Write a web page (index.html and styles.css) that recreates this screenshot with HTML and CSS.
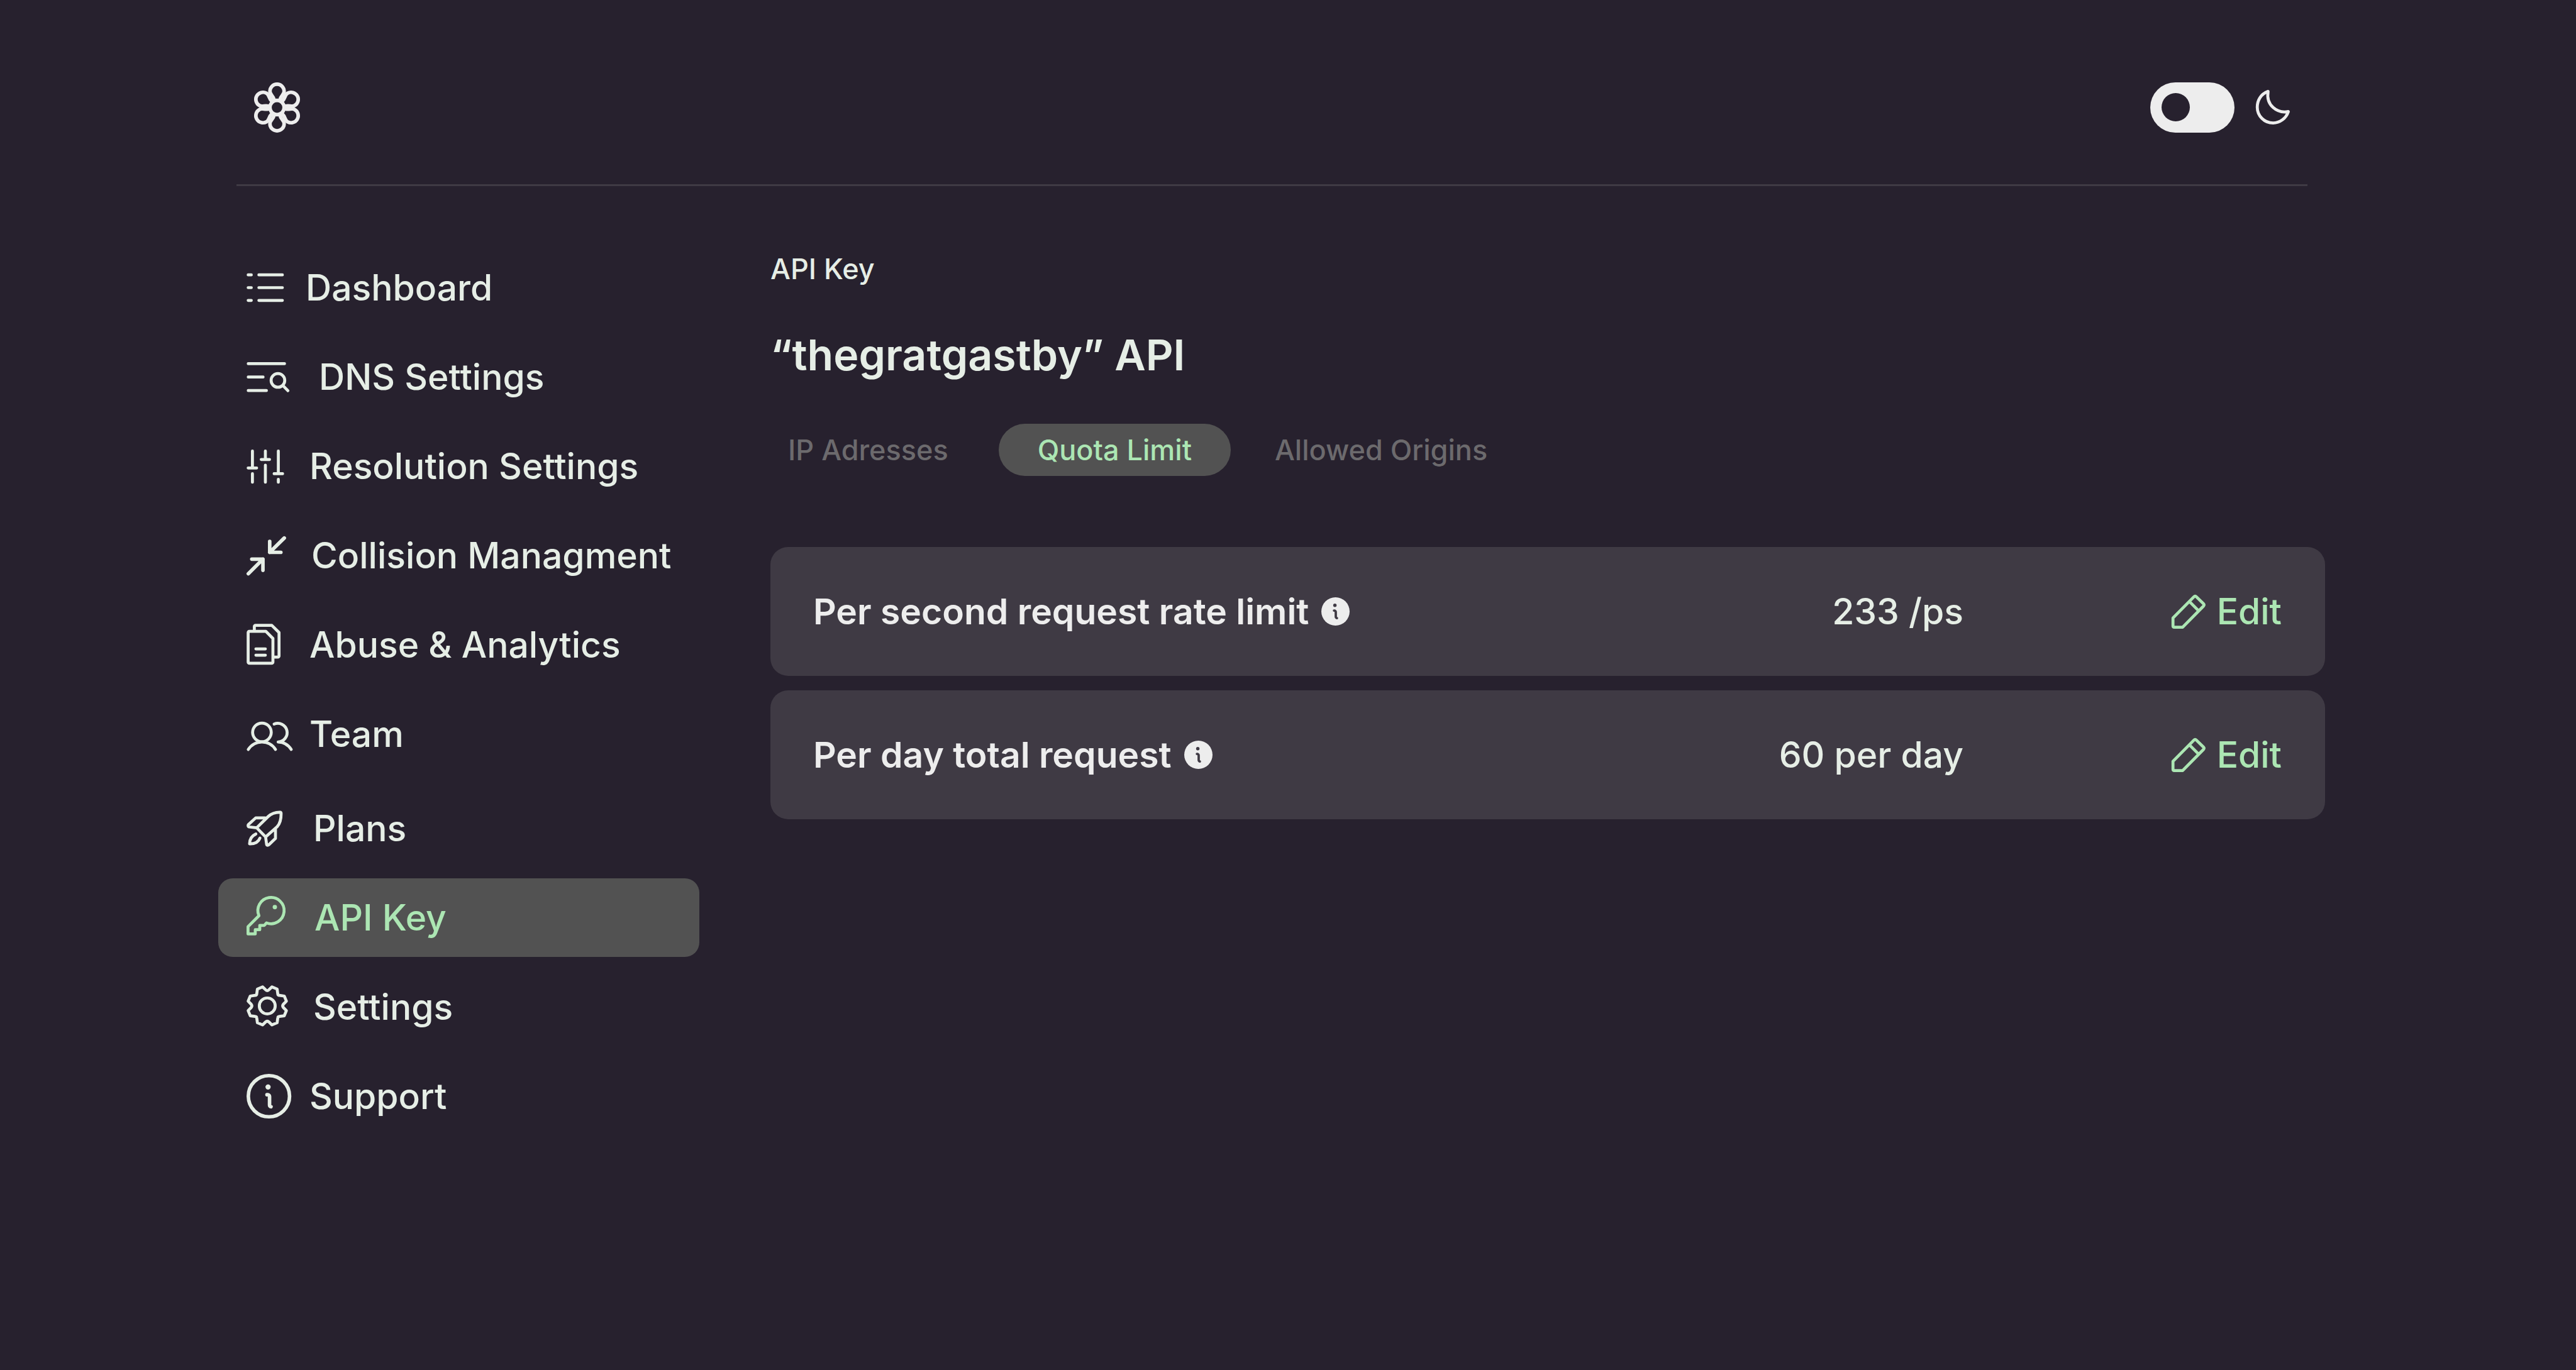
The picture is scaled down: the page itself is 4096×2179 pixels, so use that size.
FILE: index.html
```html
<!DOCTYPE html>
<html lang="en">
<head>
<meta charset="utf-8">
<title>API Key – Quota Limit</title>
<meta name="viewport" content="width=device-width, initial-scale=1">
<link rel="stylesheet" href="styles.css">
</head>
<body>
<div class="page">
  <header class="topbar">
    <a class="logo" href="#" aria-label="Home">
      <svg class="flower" viewBox="0 0 77 84" width="73" height="80" aria-hidden="true">
        <defs><path id="petal" d="M33.4 28.4C32 22 26.600 20.500 26.600 14.700a11.900 11.900 0 0 1 23.800 0C50.400 20.500 45 22 43.600 28.400"/></defs>
        <circle cx="38.500" cy="42" r="11.900"/>
        <use href="#petal"/>
        <use href="#petal" transform="rotate(60 38.500 42)"/>
        <use href="#petal" transform="rotate(120 38.500 42)"/>
        <use href="#petal" transform="rotate(180 38.500 42)"/>
        <use href="#petal" transform="rotate(240 38.500 42)"/>
        <use href="#petal" transform="rotate(300 38.500 42)"/>
      </svg>
    </a>
    <label class="theme">
      <input class="switch" type="checkbox" role="switch" aria-label="Light theme">
      <svg viewBox="0 0 57 58" width="54" height="55" aria-hidden="true">
        <path d="M20.500 2.400C8 7 2.300 18 2.300 29A26.500 26.500 0 0 0 28.800 55.500C40 55.500 50.500 48 54.500 36.300C36 40 16.500 26 20.500 2.400Z"/>
      </svg>
    </label>
  </header>

  <div class="layout">
    <nav class="sidebar" aria-label="Main">
      <ul class="nav-group">
        <li><a class="nav-link" href="#">
          <svg viewBox="0 0 74 90" width="70" height="85" aria-hidden="true"><path d="M2.700 23.500H8M20.700 23.500H60.300M2.700 45H8M20.700 45H60.300M2.700 66.500H8M20.700 66.500H60.300"/></svg>
          Dashboard</a></li>
        <li><a class="nav-link" href="#">
          <svg viewBox="0 0 96 90" width="91" height="85" aria-hidden="true"><path d="M2.700 22.700H63.800M2.700 45.200H27.700M2.700 68H33.300M61 59.500 69.500 68.200"/><circle cx="52.700" cy="50.900" r="11.500"/></svg>
          DNS Settings</a></li>
        <li><a class="nav-link" href="#">
          <svg viewBox="0 0 80 90" width="76" height="85" aria-hidden="true"><path d="M9.700 19.400V48M2.500 48H16.800M9.700 57.600V72M31.500 19.400V33.700M24.500 33.700H38.500M31.500 43.300V72M53.300 19.400V57.600M46.200 57.600H60.500M53.300 67.200V72"/></svg>
          Resolution Settings</a></li>
        <li><a class="nav-link" href="#">
          <svg class="bold" viewBox="0 0 83 90" width="79" height="85" aria-hidden="true"><path d="M63.300 15.500 38.700 39.700M38.700 21.200V39.700H57.500M2.700 75.800 27.300 51.200M8.500 51.200H27.300V70"/></svg>
          Collision Managment</a></li>
        <li><a class="nav-link" href="#">
          <svg viewBox="0 0 80 90" width="76" height="85" aria-hidden="true"><path d="M32.300 22.300H4.500a2 2 0 0 0-2 2V74.200a2 2 0 0 0 2 2H42.200a2 2 0 0 0 2-2V34.400ZM12.900 22V14.300a2 2 0 0 1 2-2H42.300L54.500 24.400V63.800a2 2 0 0 1-2 2H45M15.500 51.900H31.500M15.500 62.600H31.500"/></svg>
          Abuse &amp; Analytics</a></li>
        <li><a class="nav-link" href="#">
          <svg viewBox="0 0 80 90" width="76" height="85" aria-hidden="true"><circle cx="25.700" cy="42.200" r="15.700"/><path d="M2.700 71C8 63 16 58.500 25.700 58.500S43.500 63 48.500 71M46.200 28.200A15.700 15.700 0 1 1 53 58.300M53 58.300C62 58.500 70 63 75 71"/></svg>
          Team</a></li>
      </ul>
      <ul class="nav-group">
        <li><a class="nav-link" href="#">
          <svg viewBox="0 0 86 90" width="82" height="85" aria-hidden="true"><path d="M16.700 44.100 36 25.200C42 19.500 49 17.800 56 17.900Q57.800 18 57.800 20C57.900 28 56 37 51 42.400L31.700 59.500ZM31 27.400H15L2.700 38.600C1.800 39.800 2 42.400 4 42.600L16.700 44.100M48.300 46V62L37 72.800C35.800 73.800 33.600 73.600 33.400 72L31.700 59.500M15.300 54.500C7.500 58 4.800 63 4.700 71C13 71.300 19.500 68.500 22.200 61.300"/></svg>
          Plans</a></li>
        <li><a class="nav-link active" href="#" aria-current="page">
          <svg viewBox="0 0 89 90" width="84" height="85" aria-hidden="true"><path d="M33.700 53.900A22.100 22.100 0 1 0 20.900 41.800L2.500 60.300V72.500H14.700V65.300H22.300V58H30Z"/><circle class="dot" cx="47.700" cy="27.300" r="3.700"/></svg>
          API Key</a></li>
        <li><a class="nav-link" href="#">
          <svg viewBox="0 0 86 90" width="82" height="85" aria-hidden="true"><circle cx="34.500" cy="43.300" r="13.400"/><path d="M34.500 17.600Q32.800 17.600 31.600 16L26.700 11.300 17.900 15 16.800 23Q16.600 25.400 14 25.600L5.900 26.700 2.300 35.400 7.400 40.500Q9.600 43.300 7.400 46.100L2.300 51.200 5.900 59.900 14 61Q16.600 61.200 16.800 63.600L17.900 71.600 26.700 75.300 31.600 70.400Q34.500 67.600 37.400 70.400L42.300 75.300 51.100 71.600 52.200 63.600Q52.400 61.200 55 61L63.100 59.900 66.700 51.200 61.600 46.100Q59.400 43.300 61.600 40.500L66.700 35.400 63.100 26.700 55 25.600Q52.400 25.400 52.200 23L51.100 15 42.300 11.300 37.400 16Q36.200 17.600 34.500 17.600Z"/></svg>
          Settings</a></li>
        <li><a class="nav-link" href="#">
          <svg class="bold" viewBox="0 0 80 90" width="76" height="85" aria-hidden="true"><circle cx="37.500" cy="45" r="34.700"/><circle class="dot" cx="36" cy="29.500" r="4.400"/><path d="M34.200 42.500h1.300a3 3 0 0 1 3 3V60a3 3 0 0 0 2.500 2.800"/></svg>
          Support</a></li>
      </ul>
    </nav>

    <main class="content">
      <p class="crumb">API Key</p>
      <h1 class="title">“thegratgastby” API</h1>
      <div class="tabs" role="tablist">
        <button class="tab" type="button" role="tab" aria-selected="false">IP Adresses</button>
        <button class="tab selected" type="button" role="tab" aria-selected="true">Quota Limit</button>
        <button class="tab" type="button" role="tab" aria-selected="false">Allowed Origins</button>
      </div>
      <ul class="limits">
        <li class="limit">
          <h2 class="limit-name">Per second request rate limit
            <svg class="info" viewBox="0 0 48 48" width="45" height="45" aria-hidden="true"><circle class="disc" cx="24" cy="24" r="24"/><circle class="mark-dot" cx="23" cy="13.500" r="2.900"/><path class="mark" d="M21.500 22.500h.5a2.500 2.500 0 0 1 2.500 2.500V33a2.500 2.500 0 0 0 2 2.300"/></svg>
          </h2>
          <span class="limit-value">233 /ps</span>
          <button class="edit" type="button">
            <svg viewBox="0 0 57 58" width="54" height="55" aria-hidden="true"><path d="M2.300 40 37.500 4.300Q39.500 2.300 41.500 4.300L53.500 16Q55.500 18 53.500 20L18.500 55.500H4.500Q2.300 55.500 2.300 53.300ZM30 12.500 45.500 28"/></svg>
            Edit</button>
        </li>
        <li class="limit">
          <h2 class="limit-name">Per day total request
            <svg class="info" viewBox="0 0 48 48" width="45" height="45" aria-hidden="true"><circle class="disc" cx="24" cy="24" r="24"/><circle class="mark-dot" cx="23" cy="13.500" r="2.900"/><path class="mark" d="M21.500 22.500h.5a2.500 2.500 0 0 1 2.500 2.500V33a2.500 2.500 0 0 0 2 2.300"/></svg>
          </h2>
          <span class="limit-value">60 per day</span>
          <button class="edit" type="button">
            <svg viewBox="0 0 57 58" width="54" height="55" aria-hidden="true"><path d="M2.300 40 37.500 4.300Q39.500 2.300 41.500 4.300L53.500 16Q55.500 18 53.500 20L18.500 55.500H4.500Q2.300 55.500 2.300 53.300ZM30 12.500 45.500 28"/></svg>
            Edit</button>
        </li>
      </ul>
    </main>
  </div>
</div>
</body>
</html>
```

FILE: styles.css
```css
* {
  box-sizing: border-box;
}

body {
  margin: 0;
  min-height: 100vh;
  background: #27212e;
  color: #e6eee6;
  font-family: Inter, "Liberation Sans", sans-serif;
  font-size: 57px;
  line-height: 69px;
  font-weight: 500;
}

ul {
  margin: 0;
  padding: 0;
  list-style: none;
}

svg {
  flex: none;
  fill: none;
  stroke: currentColor;
  stroke-width: 5;
  stroke-linecap: round;
  stroke-linejoin: round;
  overflow: visible;
}

button {
  border: 0;
  padding: 0;
  background: none;
  color: inherit;
  font: inherit;
  cursor: pointer;
}

.page {
  padding: 0 399px 0 347px;
}

/* Top bar */
.topbar {
  display: flex;
  align-items: center;
  justify-content: space-between;
  height: 296px;
  margin: 0 28px 0 29px;
  padding: 48px 28px 0;
  border-bottom: 3px solid #3f3a44;
  color: #ededed;
}

.logo {
  display: flex;
  color: inherit;
}

.flower,
.bold {
  stroke-width: 6;
}

.theme {
  display: flex;
  align-items: center;
  gap: 34px;
}

.switch {
  display: flex;
  align-items: center;
  appearance: none;
  width: 134px;
  height: 80px;
  margin: 0;
  padding: 0 18px;
  border-radius: 40px;
  background: #ededed;
  cursor: pointer;
}

.switch::before {
  content: "";
  width: 45px;
  height: 45px;
  border-radius: 50%;
  background: #27212e;
}

.switch:checked {
  justify-content: flex-end;
}

/* Columns */
.layout {
  display: grid;
  grid-template-columns: 765px 1fr;
  gap: 113px;
  padding-top: 99px;
}

/* Sidebar */
.sidebar {
  display: flex;
  flex-direction: column;
  gap: 25px;
}

.nav-group {
  display: flex;
  flex-direction: column;
  gap: 17px;
}

.nav-link {
  display: flex;
  align-items: center;
  gap: 24px;
  height: 125px;
  padding: 0 45px;
  border-radius: 23px;
  color: #e6eee6;
  text-decoration: none;
  white-space: nowrap;
}

.nav-link.active {
  background: #525252;
  color: #ace6b3;
}

.dot {
  fill: currentColor;
  stroke: none;
}

/* Content */
.content {
  padding-top: 5px;
}

.crumb,
.title,
.limit-name {
  margin: 0;
}

.crumb {
  font-size: 45px;
  line-height: 56px;
}

.title {
  margin-top: 67px;
  font-size: 68px;
  line-height: 82px;
  font-weight: 600;
}

.tabs {
  display: flex;
  gap: 8px;
  margin-top: 69px;
}

.tab {
  height: 83px;
  padding: 0 62px;
  border-radius: 42px;
  color: #6c6a6d;
  font-size: 45px;
  line-height: 56px;
}

.tab:first-child {
  padding: 0 72px 0 28px;
}

.tab.selected {
  background: #525252;
  color: #ace6b3;
}

.limits {
  display: flex;
  flex-direction: column;
  gap: 23px;
  margin-top: 113px;
}

.limit {
  display: grid;
  grid-template-columns: 1fr auto 506px;
  align-items: center;
  height: 205px;
  padding: 0 69px 0 68px;
  border-radius: 28px;
  background: #3f3a44;
}

.limit-name {
  display: flex;
  align-items: center;
  gap: 20px;
  color: #ededed;
  font-size: 57px;
  line-height: 69px;
  font-weight: 600;
}

.edit {
  display: flex;
  align-items: center;
  justify-self: end;
  gap: 18px;
  color: #ace6b3;
}

.disc {
  fill: currentColor;
  stroke: none;
}

.mark-dot {
  fill: #3f3a44;
  stroke: none;
}

.mark {
  stroke: #3f3a44;
  stroke-width: 4;
}
```
